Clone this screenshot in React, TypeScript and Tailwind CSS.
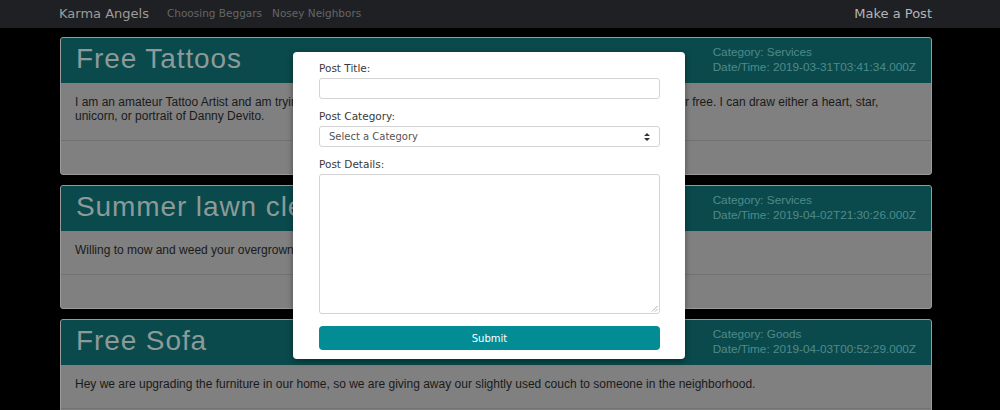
import type { ReactNode } from "react";

const POSTS = [
  {
    title: "Free Tattoos",
    category: "Services",
    date: "2019-03-31T03:41:34.000Z",
    body: "I am an amateur Tattoo Artist and am trying to build up my tattoo portfolios, so now I am offering to tattoo anyone for free. I can draw either a heart, star, unicorn, or portrait of Danny Devito.",
  },
  {
    title: "Summer lawn cleanup",
    category: "Services",
    date: "2019-04-02T21:30:26.000Z",
    body: "Willing to mow and weed your overgrown lawn this summer.",
  },
  {
    title: "Free Sofa",
    category: "Goods",
    date: "2019-04-03T00:52:29.000Z",
    body: "Hey we are upgrading the furniture in our home, so we are giving away our slightly used couch to someone in the neighborhood.",
  },
];

const GEO = "font-['DejaVu_Sans',sans-serif]";

function PostCard({ title, category, date, body }: (typeof POSTS)[number]) {
  return (
    <article className="rounded-[3px] border border-[#9a9a9a] overflow-hidden shrink-0 bg-[#808080]">
      <header className="h-[45px] bg-[#0a4a4c] flex items-center justify-between pl-[15px] pr-[15px] pb-[4px]">
        <h2 className="font-['Liberation_Sans',sans-serif] text-[28px] leading-none tracking-[0.9px] text-[#8c9a9a]">
          {title}
        </h2>
        <div className="font-['Liberation_Sans',sans-serif] text-[11.75px] leading-[15px] text-[#4f8b8b]">
          <div>Category: {category}</div>
          <div>Date/Time: {date}</div>
        </div>
      </header>
      <div className="px-[14px] pt-[12px] pb-[17px] font-['Liberation_Sans',sans-serif] text-[12px] leading-[14px] text-[#1a1a1a]">
        {body}
      </div>
      <footer className="h-[34px] border-t border-[#727272]" />
    </article>
  );
}

function Field({ label, children, first }: { label: string; children: ReactNode; first?: boolean }) {
  return (
    <div className={first ? "" : "mt-[10px]"}>
      <label className={`${GEO} block h-[14px] text-[10.5px] leading-[14px] text-[#3a3a3a]`}>{label}</label>
      <div className="mt-[3px]">{children}</div>
    </div>
  );
}

export default function App() {
  return (
    <div className="relative w-[1000px] h-[410px] overflow-hidden bg-black">
      <nav className={`${GEO} h-[28px] bg-[#1e2023] flex items-center pl-[59px] pr-[68px]`}>
        <span className="text-[13px] text-[#9c9c9c]">Karma Angels</span>
        <span className="ml-[18px] text-[10.5px] text-[#666]">Choosing Beggars</span>
        <span className="ml-[10px] text-[10.5px] text-[#666]">Nosey Neighbors</span>
        <span className="ml-auto text-[13px] text-[#b4b4b4]">Make a Post</span>
      </nav>

      <main className="pl-[60px] pr-[68px] pt-[9px] flex flex-col gap-[10px]">
        {POSTS.map((p) => (
          <PostCard key={p.title} {...p} />
        ))}
      </main>

      <div className="absolute left-[293px] top-[52px] w-[392px] bg-white rounded-[4px] pt-[9px] pb-[9px] pl-[26px] pr-[25px] shadow-[0_2px_6px_rgba(0,0,0,0.4)]">
        <Field label="Post Title:" first>
          <div className="h-[21px] rounded-[3px] border border-[#d4d4d4]" />
        </Field>
        <Field label="Post Category:">
          <div className="h-[21px] rounded-[3px] border border-[#d4d4d4] flex items-center justify-between pl-[9px] pr-[9px]">
            <span className={`${GEO} text-[10px] text-[#555]`}>Select a Category</span>
            <svg width="6" height="8" viewBox="0 0 6 8" className="text-[#333]">
              <path d="M3 0 L6 3 L0 3 Z M0 5 L6 5 L3 8 Z" fill="currentColor" />
            </svg>
          </div>
        </Field>
        <Field label="Post Details:">
          <div className="relative h-[140px] rounded-[3px] border border-[#d4d4d4]">
            <svg width="7" height="7" viewBox="0 0 7 7" className="absolute right-[1px] bottom-[1px] text-[#999]">
              <path d="M6.5 1 L1 6.5 M6.5 4 L4 6.5" stroke="currentColor" strokeWidth="0.8" />
            </svg>
          </div>
        </Field>
        <button className={`${GEO} mt-[12px] w-full h-[24px] rounded-[4px] bg-[#038c94] text-white text-[10px]`}>
          Submit
        </button>
      </div>
    </div>
  );
}
